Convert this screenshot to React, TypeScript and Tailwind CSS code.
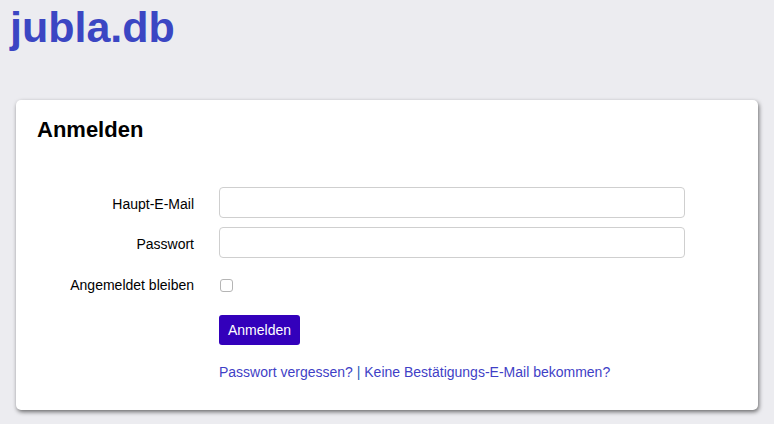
export default function App() {
  return (
    <div className="min-h-[424px] bg-[#ececf0] font-['Liberation_Sans',Arial,sans-serif] text-black">
      <header className="px-[10px] pt-[3px]">
        <a href="#" className="text-[43px] font-bold leading-[48px] text-[#3b46c3]">
          jubla.db
        </a>
      </header>

      <main className="mx-4 mt-[49px] rounded-[5px] bg-white px-[21px] pb-[29px] pt-[16px] shadow-[1px_2px_4px_rgba(0,0,0,0.55)]">
        <h1 className="text-[22px] font-bold leading-[28px]">Anmelden</h1>

        <form className="mt-[43px] grid grid-cols-[157px_466px] gap-x-[25px] text-[14px]">
          <label className="flex h-[31px] items-center justify-end pt-[3px]">Haupt-E-Mail</label>
          <input
            type="email"
            className="h-[31px] rounded-[4px] border border-[#cfcfcf] px-2 outline-none"
          />

          <label className="mt-[9px] flex h-[31px] items-center justify-end pt-[3px]">Passwort</label>
          <input
            type="password"
            className="mt-[9px] h-[31px] rounded-[4px] border border-[#cfcfcf] px-2 outline-none"
          />

          <label className="mt-[14px] flex h-[26px] items-center justify-end">Angemeldet bleiben</label>
          <div className="mt-[14px] flex h-[26px] items-center">
            <input
              type="checkbox"
              className="m-0 ml-px h-[13px] w-[13px] appearance-none rounded-[3px] border border-[#b5b5b5] bg-white"
            />
          </div>

          <div />
          <div className="mt-[17px]">
            <button
              type="button"
              className="h-[30px] rounded-[3px] bg-[#3300bb] px-[9px] text-[14px] text-white"
            >
              Anmelden
            </button>
          </div>

          <div />
          <p className="mt-[18px] leading-[18px] text-[#3f3fc6]">
            <a href="#">Passwort vergessen?</a>{" "}
            <span className="text-[#1b5fb8]">|</span>{" "}
            <a href="#">Keine Bestätigungs-E-Mail bekommen?</a>
          </p>
        </form>
      </main>
    </div>
  );
}
